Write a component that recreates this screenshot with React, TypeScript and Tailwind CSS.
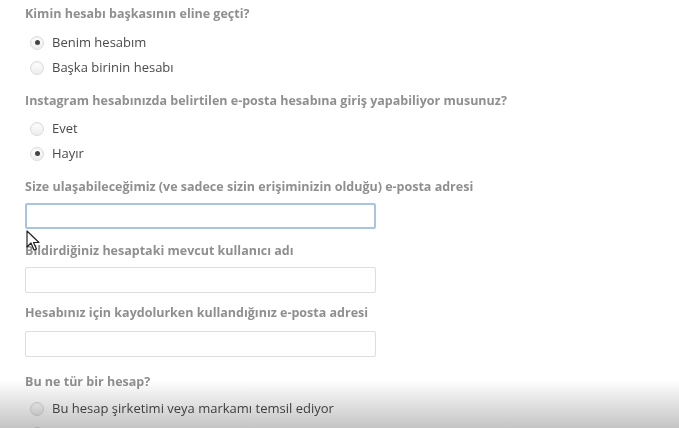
const Radio = ({ label, checked }: { label: string; checked?: boolean }) => (
  <label className="flex items-center gap-[8px] h-[25px] text-[13px] text-[#4a4a4a]">
    <span className="w-[14px] h-[14px] rounded-full border border-[#dcdcdc] bg-gradient-to-b from-white to-[#ececec] flex items-center justify-center shadow-[inset_0_1px_1px_rgba(0,0,0,0.06)]">
      {checked && <span className="w-[5px] h-[5px] rounded-full bg-[#444]" />}
    </span>
    <span>{label}</span>
  </label>
);

const Label = ({ children }: { children: React.ReactNode }) => (
  <div className="text-[12.5px] font-bold text-[#8f8f8f] leading-[16px]">{children}</div>
);

const Field = ({ focused }: { focused?: boolean }) => (
  <div
    className={
      focused
        ? "w-[351px] h-[26px] border-2 border-[#a9c3e3] rounded-[2px] bg-white"
        : "w-[351px] h-[26px] border border-[#dedede] rounded-[2px] bg-white"
    }
  />
);

export default function App() {
  return (
    <div
      className="relative w-[679px] h-[428px] overflow-hidden bg-white"
      style={{ fontFamily: "'Open Sans', 'Liberation Sans', sans-serif" }}
    >
      <div className="flex flex-col pl-[25px] pt-[6px]">
        <Label>Kimin hesabı başkasının eline geçti?</Label>
        <div className="flex flex-col pl-[5px] mt-[8px]">
          <Radio label="Benim hesabım" checked />
          <Radio label="Başka birinin hesabı" />
        </div>

        <div className="mt-[13px]">
          <Label>Instagram hesabınızda belirtilen e-posta hesabına giriş yapabiliyor musunuz?</Label>
        </div>
        <div className="flex flex-col pl-[5px] mt-[7px]">
          <Radio label="Evet" />
          <Radio label="Hayır" checked />
        </div>

        <div className="mt-[13px]">
          <Label>Size ulaşabileceğimiz (ve sadece sizin erişiminizin olduğu) e-posta adresi</Label>
        </div>
        <div className="mt-[8px]">
          <Field focused />
        </div>

        <div className="mt-[14px]">
          <Label>Bildirdiğiniz hesaptaki mevcut kullanıcı adı</Label>
        </div>
        <div className="mt-[8px]">
          <Field />
        </div>

        <div className="mt-[12px]">
          <Label>Hesabınız için kaydolurken kullandığınız e-posta adresi</Label>
        </div>
        <div className="mt-[10px]">
          <Field />
        </div>

        <div className="mt-[17px]">
          <Label>Bu ne tür bir hesap?</Label>
        </div>
        <div className="flex flex-col pl-[5px] mt-[6px]">
          <Radio label="Bu hesap şirketimi veya markamı temsil ediyor" />
          <Radio label="Bu hesap başka birini taklit ediyor" />
        </div>
      </div>

      {/* video overlay shade */}
      <div className="pointer-events-none absolute left-0 right-0 bottom-0 h-[48px] mix-blend-multiply bg-gradient-to-b from-white to-[#c4c4c4]" />

      {/* mouse cursor */}
      <svg className="absolute left-[26px] top-[230px]" width="14" height="22" viewBox="0 0 14 22">
        <path d="M1 1 L1 17 L5 13 L8 20 L10.5 19 L7.5 12.5 L13 12.5 Z" fill="white" stroke="#222" strokeWidth="1.2" strokeLinejoin="round" />
      </svg>
    </div>
  );
}
